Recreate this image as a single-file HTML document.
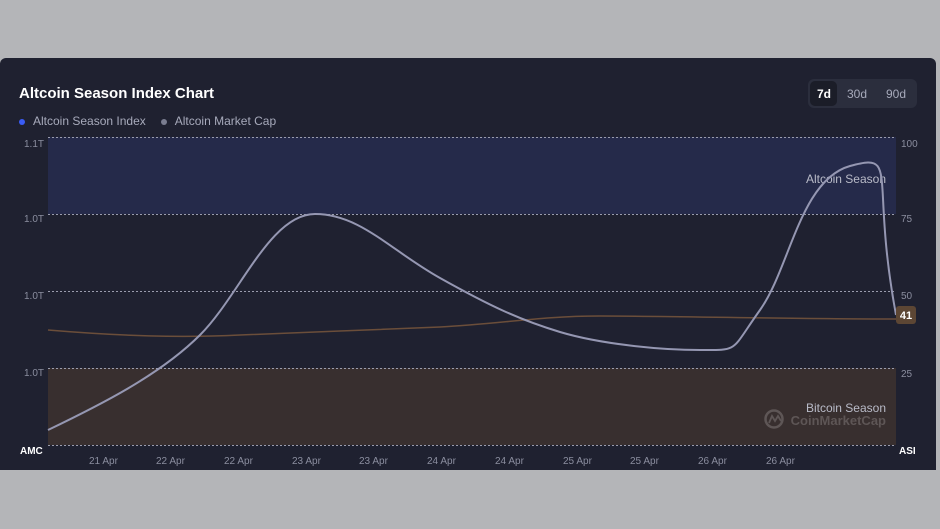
<!DOCTYPE html>
<html><head><style>
body{margin:0;width:940px;height:529px;background:#b4b5b8;font-family:"Liberation Sans",sans-serif;overflow:hidden;position:relative}
.card{position:absolute;left:0;top:58px;width:936px;height:412px;background:#1f2130;border-radius:6px 6px 0 0}
.t{position:absolute;color:#fff}
</style></head><body>
<div class="card"></div>
<div class="t" style="left:19px;top:85px;font-size:15px;font-weight:bold">Altcoin Season Index Chart</div>
<div class="t" style="left:19px;top:114px;font-size:12px;color:#a7aabb"><span style="display:inline-block;width:6px;height:6px;border-radius:50%;background:#3a5cf5;margin-right:8px"></span>Altcoin Season Index<span style="display:inline-block;width:6px;height:6px;border-radius:50%;background:#7a7d90;margin:0 8px 0 15px"></span>Altcoin Market Cap</div>
<div style="position:absolute;left:808px;top:79px;width:109px;height:29px;background:#2b2e3d;border-radius:6px"></div>
<div style="position:absolute;left:810px;top:81px;width:27px;height:25px;background:#1b1d28;border-radius:5px"></div>
<div class="t" style="left:817px;top:87px;font-size:12px;font-weight:bold">7d</div>
<div class="t" style="left:847px;top:87px;font-size:12px;color:#a7aabb">30d</div>
<div class="t" style="left:886px;top:87px;font-size:12px;color:#a7aabb">90d</div>
<svg style="position:absolute;left:0;top:0" width="940" height="529">
<rect x="48" y="137" width="848" height="77" fill="#252a4a"/>
<rect x="48" y="368" width="848" height="77" fill="#382f2f"/>
<g stroke="#9a9cad" stroke-dasharray="2,2" stroke-width="1">
<line x1="48" y1="137.5" x2="896" y2="137.5"/><line x1="48" y1="214.5" x2="896" y2="214.5"/><line x1="48" y1="291.5" x2="896" y2="291.5"/><line x1="48" y1="368.5" x2="896" y2="368.5"/><line x1="48" y1="445.5" x2="896" y2="445.5"/></g>
<g font-size="10" fill="#8b8e9f">
<text x="24" y="147">1.1T</text><text x="24" y="222">1.0T</text><text x="24" y="299">1.0T</text><text x="24" y="376">1.0T</text>
<text x="901" y="147">100</text><text x="901" y="222">75</text><text x="901" y="299">50</text><text x="901" y="377">25</text>
<text x="89" y="464">21 Apr</text><text x="156" y="464">22 Apr</text><text x="224" y="464">22 Apr</text><text x="292" y="464">23 Apr</text><text x="359" y="464">23 Apr</text><text x="427" y="464">24 Apr</text><text x="495" y="464">24 Apr</text><text x="563" y="464">25 Apr</text><text x="630" y="464">25 Apr</text><text x="698" y="464">26 Apr</text><text x="766" y="464">26 Apr</text>
</g>
<text x="20" y="454" font-size="10" font-weight="bold" fill="#fff">AMC</text>
<text x="899" y="454" font-size="10" font-weight="bold" fill="#fff">ASI</text>
<text x="886" y="183" font-size="12" fill="#b9bbc8" text-anchor="end">Altcoin Season</text>
<text x="886" y="412" font-size="12" fill="#b9bbc8" text-anchor="end">Bitcoin Season</text>
<circle cx="774" cy="419" r="8.5" fill="none" stroke="#5e5656" stroke-width="2.5"/>
<path d="M769 423 L772 416 L775 421 L778 416 L781 421" fill="none" stroke="#5e5656" stroke-width="1.8"/>
<text x="886" y="425" font-size="13" font-weight="bold" fill="#5e5656" text-anchor="end">CoinMarketCap</text>
<path d="M48 330 C120 336 180 338 240 335 S380 330 440 327 S540 316 600 316 S800 319 896 319" fill="none" stroke="#6b4e3a" stroke-width="1.5"/>
<path d="M48 430 C100 405 160 375 200 335 S270 214 315 214 S390 250 440 278 S520 320 560 332 S660 350 700 350 S730 352 760 310 S800 180 850 166 S870 175 896 315" fill="none" stroke="#9597b2" stroke-width="2"/>
<rect x="896" y="306" width="20" height="18" rx="3" fill="#5c4634"/>
<text x="906" y="319" font-size="11" font-weight="bold" fill="#fff" text-anchor="middle">41</text>
</svg>
</body></html>
